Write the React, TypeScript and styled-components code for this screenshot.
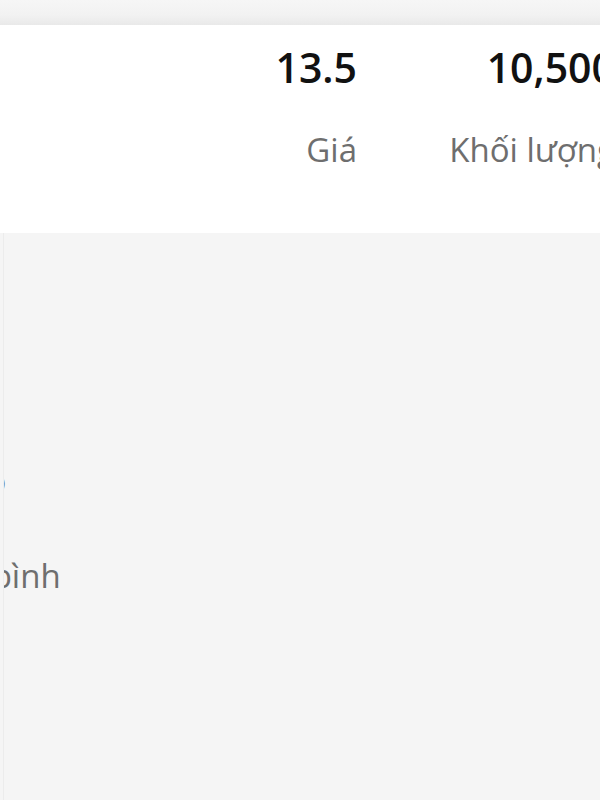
import React from "react";
import styled, { createGlobalStyle } from "styled-components";

const GlobalStyle = createGlobalStyle`
  html, body {
    margin: 0;
    padding: 0;
    background: #f5f5f5;
    font-family: "Open Sans", "Noto Sans", sans-serif;
  }
  #root {
    width: 600px;
    height: 800px;
    overflow: hidden;
  }
`;

const Page = styled.div`
  width: 600px;
  height: 800px;
  overflow: hidden;
  background: #f5f5f5;
  display: flex;
  flex-direction: column;
`;

const TopStrip = styled.div`
  height: 25px;
  flex-shrink: 0;
  background: linear-gradient(#f6f6f6 0%, #f2f2f2 60%, #e9e9e9 100%);
`;

const StatsPanel = styled.div`
  flex-shrink: 0;
  height: 208px;
  box-sizing: border-box;
  background: #ffffff;
  padding-top: 18px;
  display: grid;
  grid-template-columns: 357px 258px;
  overflow: hidden;
`;

const StatCell = styled.div`
  display: flex;
  flex-direction: column;
  align-items: flex-end;
  white-space: nowrap;
`;

const StatValue = styled.div`
  font-size: 41px;
  line-height: 48px;
  font-weight: 600;
  color: #111111;
`;

const StatLabel = styled.div`
  margin-top: 39px;
  font-size: 33px;
  line-height: 40px;
  color: #6e6e6e;
`;

const Body = styled.div`
  flex: 1;
  background: #f5f5f5;
  border-left: 1px solid #ececec;
  margin-left: 3px;
  padding-top: 228px;
  overflow: hidden;
`;

const List = styled.div`
  margin-left: -111px;
  display: flex;
  flex-direction: column;
  gap: 55px;
`;

const ListLabel = styled.div`
  font-size: 33px;
  line-height: 40px;
  color: #6e6e6e;
  white-space: nowrap;
`;

const stats = [
  { value: "13.5", label: "Giá" },
  { value: "10,500", label: "Khối lượng" },
];

export default function App() {
  return (
    <>
      <GlobalStyle />
      <Page>
        <TopStrip />
        <StatsPanel>
          {stats.map((s) => (
            <StatCell key={s.label}>
              <StatValue>{s.value}</StatValue>
              <StatLabel>{s.label}</StatLabel>
            </StatCell>
          ))}
        </StatsPanel>
        <Body>
          <List>
            <ListLabel>Giá cao</ListLabel>
            <ListLabel>Trung bình</ListLabel>
          </List>
        </Body>
      </Page>
    </>
  );
}
